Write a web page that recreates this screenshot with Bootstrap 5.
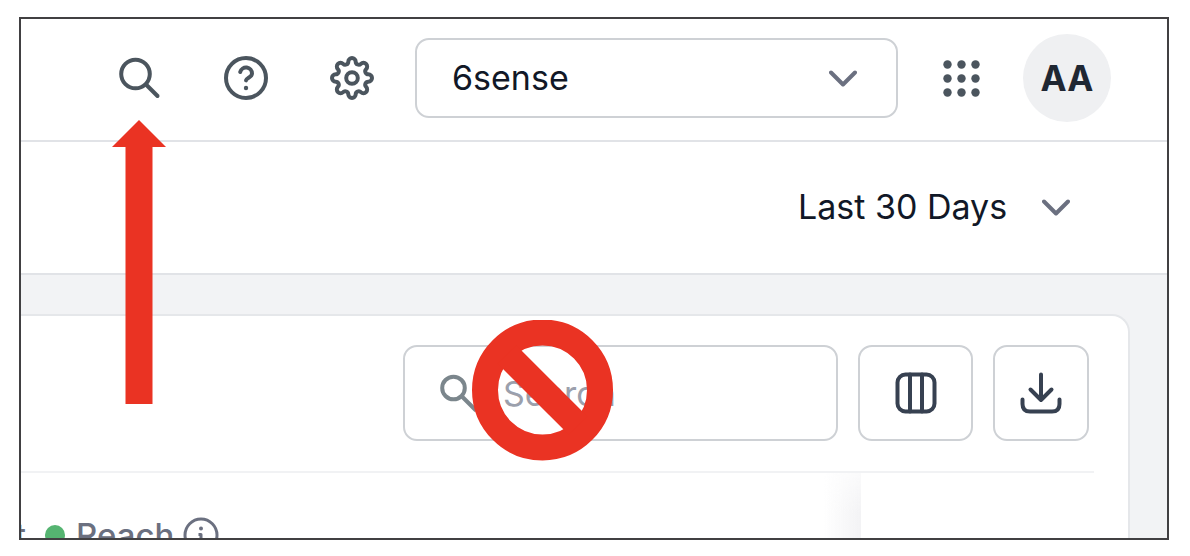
<!DOCTYPE html>
<html lang="en">
<head>
<meta charset="utf-8">
<meta name="viewport" content="width=device-width, initial-scale=1">
<title>Dashboard</title>
<link href="https://cdn.jsdelivr.net/npm/bootstrap@5.3.0/dist/css/bootstrap.min.css" rel="stylesheet">
<style>
  body { font-family: Inter, "Liberation Sans", sans-serif; font-size: 34px; line-height: 48px; color: #111827; background: #fff; }
  .page-wrap { padding: 17px 21px 16px 19px; }
  .app-frame { border: 2px solid #414042; background: #f2f3f5; min-height: 0; }
  svg { display: block; fill: none; stroke: currentColor; stroke-linecap: round; stroke-linejoin: round; }
  .top-bar { padding: 15px 56px 18px 20px; border-bottom: 2px solid #e1e3e7; }
  .filter-bar { padding: 41px 97px 42px 20px; border-bottom: 2px solid #e1e3e7; }
  .icon-btn { padding: 0; border: 0; background: none; color: #4b555e; }
  .icon-set { gap: 62px; margin-right: 41px; }
  .picker { appearance: none; border: 0; background: none; color: inherit; padding: 0; outline-offset: 2px; }
  .account-box { width: 483px; }
  .account-box .picker { height: 80px; width: 100%; padding: 0 76px 0 35px; border: 2px solid #ced1d5; border-radius: 14px; background: #fff; }
  .account-box svg { right: 41px; }
  .range-box .picker { padding-right: 62px; }
  .chevron { color: #6b7080; pointer-events: none; }
  .grid-btn { margin: 0 43px 0 45px; }
  .avatar { width: 88px; height: 88px; background: #eff0f2; color: #1f2733; font-weight: 700; font-size: 35px; border: 0; padding: 0; }
  .pointer-arrow { top: 64px; left: -6px; z-index: 3; pointer-events: none; }
  .panel { margin: 39px 37px 0 0; border: 2px solid #e5e7ea; border-left: 0; border-bottom: 0; border-radius: 0 18px 0 0; background: #fff; }
  .tool-row { padding: 29px 39px 30px 0; gap: 20px; }
  .find-box { width: 435px; color: #7b868c; }
  .find-box input { width: 100%; height: 96px; border: 2px solid #ced1d5; border-radius: 14px; padding: 0 20px 0 98px; background: #fff; color: #111827; }
  .find-box input::placeholder { color: #9ba0ac; opacity: 1; }
  .find-icon { left: 36px; }
  .no-sign { left: 68px; z-index: 3; pointer-events: none; }
  .tool-btn { height: 96px; width: 96px; border: 2px solid #ced1d5; border-radius: 14px; background: #fff; color: #374151; padding: 0; }
  .tool-btn.wide-btn { width: 115px; }
  .rule { height: 2px; margin-right: 34px; background: #f1f2f4; }
  .legend { padding-top: 38px; color: #6b7080; font-size: 33px; font-weight: 500; }
  .cut-label { width: 5px; direction: rtl; white-space: nowrap; margin-right: 19px; }
  .dot { width: 20px; height: 20px; background: #55b471; margin-right: 11px; }
  .legend svg { margin-left: 9px; }
  .pinned { width: 267px; background: #fff; }
  .edge-shade { width: 38px; background: linear-gradient(to right, #fff0, #f3f3f5); -webkit-mask-image: linear-gradient(#0006, #000 40px); mask-image: linear-gradient(#0006, #000 40px); }
</style>
</head>
<body>
<div class="page-wrap vh-100 d-flex">
  <main class="app-frame flex-grow-1 d-flex flex-column overflow-hidden">
    <header class="top-bar bg-white d-flex align-items-center justify-content-end">
      <div class="icon-set d-flex align-items-center">
        <div class="position-relative">
          <button class="icon-btn d-block" type="button" aria-label="Search">
            <svg width="44" height="44" viewBox="0 0 44 44" stroke-width="4"><circle cx="17.500" cy="18" r="14.300"/><path d="M28 28.500 39.500 40"/></svg>
          </button>
          <svg class="pointer-arrow position-absolute" width="54" height="284" viewBox="0 0 54 284" aria-hidden="true"><path d="M27 0 54 27H40.500V284H13.500V27H0Z" fill="#ea3323" stroke="none"/></svg>
        </div>
        <button class="icon-btn" type="button" aria-label="Help">
          <svg width="44" height="44" viewBox="0 0 44 44" stroke-width="4"><circle cx="22" cy="22" r="20"/><path d="M16.200 16A6 6 0 0 1 28 17.600C28 21.500 22.500 21.800 22 24.400"/><circle cx="22" cy="32" r="2.200" fill="currentColor" stroke="none"/></svg>
        </button>
        <button class="icon-btn" type="button" aria-label="Settings">
          <svg width="44" height="44" viewBox="-22 -22 44 44" stroke-width="4"><circle r="5.800"/><path d="M-3.700-16.300A3.700 3.700 0 0 1 3.700-16.300A3.050 3.050 0 0 0 8.910-14.140A3.700 3.700 0 0 1 14.140-8.910A3.050 3.050 0 0 0 16.300-3.700A3.700 3.700 0 0 1 16.300 3.700A3.050 3.050 0 0 0 14.140 8.910A3.700 3.700 0 0 1 8.910 14.140A3.050 3.050 0 0 0 3.700 16.300A3.700 3.700 0 0 1-3.700 16.300A3.050 3.050 0 0 0-8.910 14.140A3.700 3.700 0 0 1-14.140 8.910A3.050 3.050 0 0 0-16.300 3.700A3.700 3.700 0 0 1-16.300-3.700A3.050 3.050 0 0 0-14.140-8.910A3.700 3.700 0 0 1-8.910-14.140A3.050 3.050 0 0 0-3.700-16.300Z"/></svg>
        </button>
      </div>
      <div class="account-box position-relative d-flex align-items-center">
        <select class="picker" aria-label="Account"><option>6sense</option></select>
        <svg class="chevron position-absolute" width="28" height="17" viewBox="0 0 28 17" stroke-width="4"><path d="M2 2.500 14 14.500 26 2.500"/></svg>
      </div>
      <button class="icon-btn grid-btn" type="button" aria-label="Apps">
        <svg width="37" height="37" viewBox="0 0 37 37" stroke="none"><g fill="currentColor" stroke="none"><circle cx="4.500" cy="4.500" r="4.200"/><circle cx="18.500" cy="4.500" r="4.200"/><circle cx="32.500" cy="4.500" r="4.200"/><circle cx="4.500" cy="18.500" r="4.200"/><circle cx="18.500" cy="18.500" r="4.200"/><circle cx="32.500" cy="18.500" r="4.200"/><circle cx="4.500" cy="32.500" r="4.200"/><circle cx="18.500" cy="32.500" r="4.200"/><circle cx="32.500" cy="32.500" r="4.200"/></g></svg>
      </button>
      <button class="avatar rounded-circle" type="button">AA</button>
    </header>

    <div class="filter-bar bg-white d-flex justify-content-end">
      <div class="range-box position-relative d-flex align-items-center">
        <select class="picker" aria-label="Date range"><option>Last 30 Days</option></select>
        <svg class="chevron position-absolute end-0" width="28" height="17" viewBox="0 0 28 17" stroke-width="4"><path d="M2 2.500 14 14.500 26 2.500"/></svg>
      </div>
    </div>

    <section class="panel flex-grow-1 d-flex flex-column overflow-hidden">
      <div class="tool-row d-flex justify-content-end">
        <div class="find-box position-relative d-flex align-items-center">
          <input type="text" placeholder="Search" aria-label="Search table">
          <svg class="find-icon position-absolute" width="40" height="40" viewBox="0 0 40 40" stroke-width="4"><circle cx="14.500" cy="15" r="11.300"/><path d="M23 23.500 37 37.500" stroke-linecap="butt"/></svg>
          <svg class="no-sign position-absolute" width="143" height="147" viewBox="0 0 143 147" aria-hidden="true"><g stroke="#ea3323" stroke-width="26"><circle cx="71.500" cy="70" r="57.500"/><path d="M36 34.500 107 105.500" stroke-linecap="butt"/></g></svg>
        </div>
        <button class="tool-btn wide-btn d-flex align-items-center justify-content-center" type="button" aria-label="Columns">
          <svg width="42" height="42" viewBox="0 0 42 42" stroke-width="4"><rect x="2.500" y="2.500" width="37" height="37" rx="8"/><path d="M15 2.500V39.500M27 2.500V39.500"/></svg>
        </button>
        <button class="tool-btn d-flex align-items-center justify-content-center" type="button" aria-label="Download">
          <svg width="42" height="42" viewBox="0 0 42 42" stroke-width="4"><path d="M21 2.500V28M10.500 17.500 21 28 31.500 17.500M2.500 27.500V32Q2.500 39.500 10 39.500H32Q39.500 39.500 39.500 32V27.500"/></svg>
        </button>
      </div>
      <div class="rule flex-shrink-0"></div>
      <div class="flex-grow-1 d-flex overflow-hidden">
        <div class="legend flex-grow-1 d-flex align-items-center align-self-start">
          <span class="cut-label overflow-hidden">t</span>
          <span class="dot rounded-circle"></span>
          <span>Reach</span>
          <svg width="36" height="36" viewBox="0 0 36 36" stroke-width="3" role="img" aria-label="Info"><circle cx="18" cy="18" r="16"/><path d="M15.500 17.500H18V25" stroke-linecap="butt"/><circle cx="18" cy="11.500" r="2" fill="currentColor" stroke="none"/></svg>
        </div>
        <div class="edge-shade"></div>
        <div class="pinned"></div>
      </div>
    </section>
  </main>
</div>
<script src="https://cdn.jsdelivr.net/npm/bootstrap@5.3.0/dist/js/bootstrap.bundle.min.js"></script>
</body>
</html>
